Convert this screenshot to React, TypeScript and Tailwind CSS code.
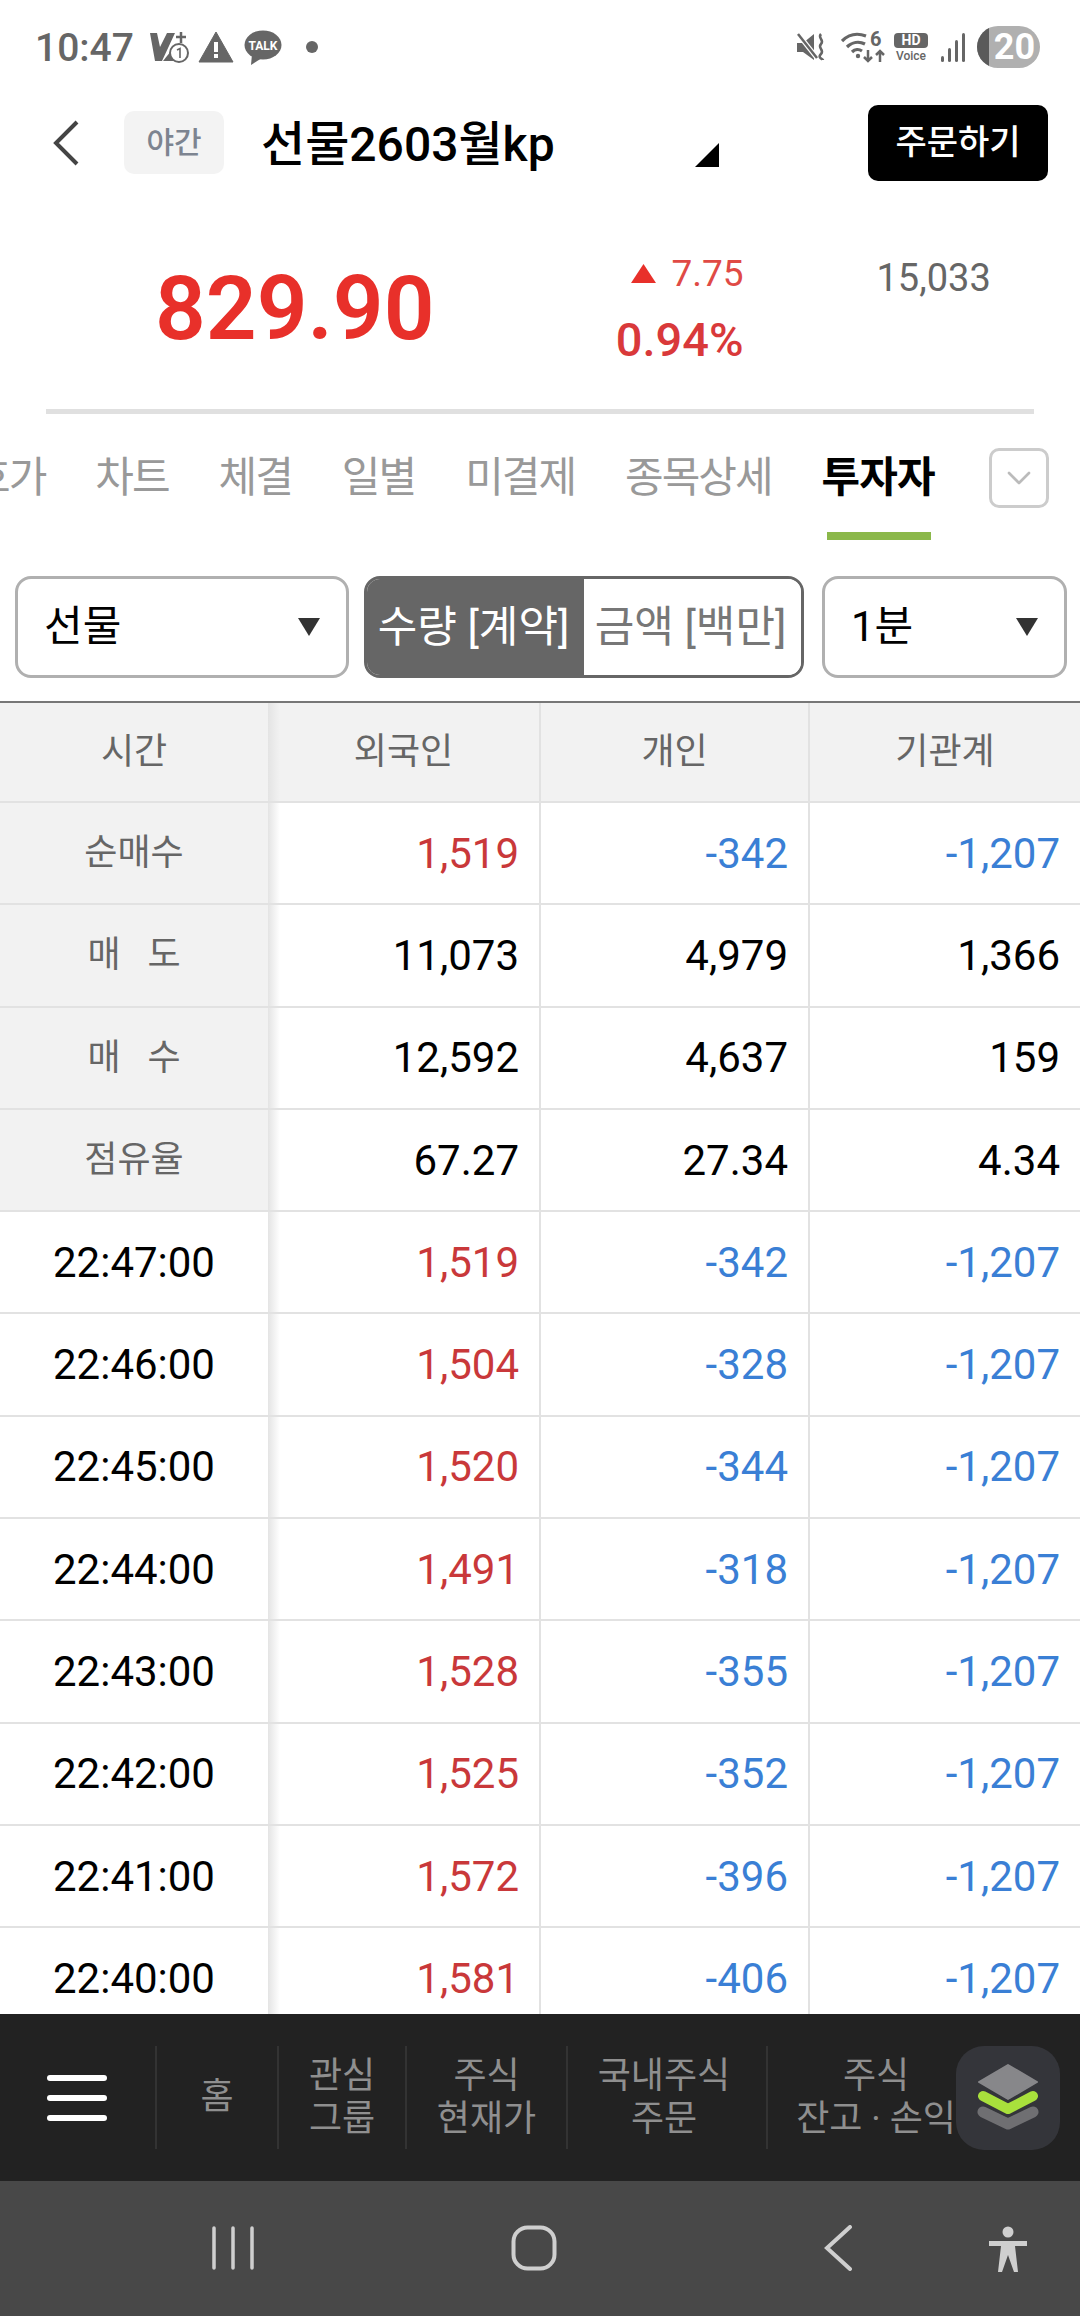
import { ChevronDown } from "lucide-react";

const FONT = "font-['Roboto','Noto_Sans_CJK_KR',sans-serif]";

const summaryRows = [
  { label: "순매수", values: ["1,519", "-342", "-1,207"], colored: true },
  { label: "매   도", values: ["11,073", "4,979", "1,366"], colored: false },
  { label: "매   수", values: ["12,592", "4,637", "159"], colored: false },
  { label: "점유율", values: ["67.27", "27.34", "4.34"], colored: false },
];

const timeRows = [
  ["22:47:00", "1,519", "-342"],
  ["22:46:00", "1,504", "-328"],
  ["22:45:00", "1,520", "-344"],
  ["22:44:00", "1,491", "-318"],
  ["22:43:00", "1,528", "-355"],
  ["22:42:00", "1,525", "-352"],
  ["22:41:00", "1,572", "-396"],
  ["22:40:00", "1,581", "-406"],
];

const tabs = ["차트", "체결", "일별", "미결제", "종목상세"];

function StatusBar() {
  return (
    <div className="h-[90px] shrink-0 flex items-center text-[#666666] pt-[4px] pl-[35px] pr-[40px]">
      <span className="text-[39px] font-medium leading-none mt-[2px]">10:47</span>
      {/* VoLTE + notification */}
      <svg className="ml-[15px]" width="40" height="32" viewBox="0 0 40 32">
        <path d="M1 2h7l3 14L18 2h8L13 30H6z" fill="#666" />
        <path d="M32 1v11M27 6h10" stroke="#666" strokeWidth="2.5" />
        <path d="M14 30l8-10 4 10z" fill="#666" />
        <circle cx="30" cy="22" r="9" fill="#fff" stroke="#666" strokeWidth="2" />
        <path d="M28 19l3-1.5V27" stroke="#666" strokeWidth="1.6" fill="none" />
      </svg>
      <svg className="ml-[9px]" width="36" height="32" viewBox="0 0 36 32">
        <path d="M18 1L35 31H1z" fill="#666" stroke="#666" strokeLinejoin="round" />
        <rect x="16" y="11" width="4" height="10" fill="#fff" />
        <rect x="16" y="23" width="4" height="4" fill="#fff" />
      </svg>
      <svg className="ml-[10px]" width="38" height="35" viewBox="0 0 38 35">
        <ellipse cx="19" cy="15" rx="18.5" ry="14.5" fill="#666" />
        <path d="M8 24l-1 11 11-7z" fill="#666" />
        <text x="19" y="20" textAnchor="middle" fontSize="12" fontWeight="700" fill="#fff" fontFamily="Roboto">
          TALK
        </text>
      </svg>
      <span className="ml-[24px] w-[12px] h-[12px] rounded-full bg-[#666666]" />

      <div className="ml-auto flex items-center">
        {/* mute */}
        <svg width="30" height="30" viewBox="0 0 30 30">
          <path d="M0 11h6L17 2v26L6 20H0z" fill="#666" />
          <path d="M1 2l19 24" stroke="#fff" strokeWidth="5" />
          <path d="M1 2l19 24" stroke="#666" strokeWidth="2.5" />
          <path d="M24 2c-4 4 4 6 0 10s4 6 0 10 2 5 2 6" stroke="#666" strokeWidth="2.5" fill="none" />
        </svg>
        {/* wifi 6 */}
        <svg className="ml-[14px]" width="45" height="32" viewBox="0 0 45 32">
          <path d="M1 10C8 3 17 2 25 5M6 16c5-5 12-6 18-3M11 21c3-3 7-3 10-1" stroke="#666" strokeWidth="3.2" fill="none" />
          <circle cx="17" cy="25" r="2.2" fill="#666" />
          <text x="29" y="15" fontSize="20" fontWeight="700" fill="#666" fontFamily="Roboto">6</text>
          <path d="M27 19v11M23 26l4 4 4-4M39 31V20M35 24l4-4 4 4" stroke="#666" strokeWidth="2.5" fill="none" />
        </svg>
        {/* HD voice */}
        <div className="ml-[8px] w-[34px] flex flex-col items-center leading-none">
          <span className="w-[34px] h-[15px] rounded-[4px] bg-[#666666] text-white text-[14px] font-bold leading-[15px] text-center">HD</span>
          <span className="text-[12px] font-medium mt-[2px]">Voice</span>
        </div>
        {/* signal */}
        <div className="ml-[13px] flex items-end gap-[4px] h-[30px]">
          <span className="w-[3px] h-[6px] rounded-sm bg-[#666666]" />
          <span className="w-[3px] h-[14px] rounded-sm bg-[#666666]" />
          <span className="w-[3px] h-[22px] rounded-sm bg-[#666666]" />
          <span className="w-[3px] h-[29px] rounded-sm bg-[#666666]" />
        </div>
        {/* battery */}
        <div className="ml-[12px] w-[63px] h-[42px] rounded-full bg-[#b0b0b0] overflow-hidden flex items-center">
          <span className="w-[12px] h-full bg-[#5a5a5a] shrink-0" />
          <span className="flex-1 text-center text-white text-[36px] font-bold leading-none">20</span>
        </div>
      </div>
    </div>
  );
}

function Header() {
  return (
    <div className="h-[91px] shrink-0 flex items-center pl-[53px] pr-[32px]">
      <svg width="26" height="46" viewBox="0 0 26 46">
        <path d="M24 2L3 23l21 21" stroke="#444" strokeWidth="4" fill="none" />
      </svg>
      <div className="ml-[45px] w-[100px] h-[63px] rounded-[10px] bg-[#f3f3f3] flex items-center justify-center text-[#7d8490] text-[30px] font-medium">
        야간
      </div>
      <h1 className="ml-[37px] text-[48px] font-medium text-black leading-none mt-[4px]">선물2603월kp</h1>
      <svg className="ml-[140px] mt-[24px]" width="24" height="24" viewBox="0 0 24 24">
        <path d="M24 0v24H0z" fill="#000" />
      </svg>
      <button className="ml-auto w-[180px] h-[76px] rounded-[10px] bg-black text-white text-[34px] font-medium">
        주문하기
      </button>
    </div>
  );
}

function Price() {
  return (
    <div className="h-[221px] shrink-0 flex items-start">
      <div className="ml-[155px] mt-[71px] text-[89px] font-semibold leading-[100px] text-[#e8302a]">829.90</div>
      <div className="ml-[182px] mt-[63px] flex flex-col items-end w-[127px]">
        <div className="flex items-center h-[44px] text-[#e04a45]">
          <svg width="25" height="19" viewBox="0 0 25 19">
            <path d="M12.5 0L25 19H0z" fill="#e8302a" />
          </svg>
          <span className="ml-[15px] text-[37px] leading-none">7.75</span>
        </div>
        <div className="mt-[20px] text-[47px] font-medium leading-[50px] text-[#d9393a]">0.94%</div>
      </div>
      <div className="ml-[133px] mt-[68px] text-[38px] leading-[44px] text-[#666666]">15,033</div>
    </div>
  );
}

function Tabs() {
  return (
    <div className="h-[167px] shrink-0">
      <div className="mx-[46px] h-[5px] bg-[#e0e0e0]" />
      <div className="h-[140px] pb-[12px] flex items-center pr-[31px] overflow-hidden">
        <div className="flex items-center gap-[50px] text-[42px] leading-none text-[#999999] ml-[-28px] tracking-[-2px]">
          <span>호가</span>
          {tabs.map((t) => (
            <span key={t}>{t}</span>
          ))}
          <span className="relative font-bold text-black tracking-[-1px]">
            투자자
            <span className="absolute left-[5px] right-[4px] top-[75px] h-[8px] bg-[#8bb84a]" />
          </span>
        </div>
        <div className="ml-auto w-[60px] h-[60px] rounded-[10px] border-[3px] border-[#cccccc] flex items-center justify-center">
          <ChevronDown className="w-[40px] h-[40px] text-[#bbbbbb]" strokeWidth={1.6} />
        </div>
      </div>
    </div>
  );
}

function Select({ label, className }: { label: string; className: string }) {
  return (
    <div className={`h-[102px] rounded-[16px] border-[3px] border-[#b0b0b0] flex items-center px-[26px] text-[42px] text-black ${className}`}>
      <span className="leading-none">{label}</span>
      <svg className="ml-auto" width="22" height="18" viewBox="0 0 22 18">
        <path d="M0 0h22L11 18z" fill="#333" />
      </svg>
    </div>
  );
}

function Controls() {
  return (
    <div className="h-[125px] shrink-0 pl-[15px] pr-[13px] flex gap-[15px]">
      <Select label="선물" className="w-[334px]" />
      <div className="w-[440px] h-[102px] rounded-[16px] border-[3px] border-[#666666] overflow-hidden flex text-[43px] whitespace-nowrap">
        <div className="w-[217px] pr-[4px] bg-[#666666] text-white flex items-center justify-center">수량 [계약]</div>
        <div className="flex-1 pr-[4px] bg-white text-[#777777] flex items-center justify-center">금액 [백만]</div>
      </div>
      <Select label="1분" className="ml-[3px] flex-1" />
    </div>
  );
}

function Row({
  first,
  firstClass,
  cells,
}: {
  first: string;
  firstClass: string;
  cells: { text: string; color: string }[];
}) {
  return (
    <div className="h-[102.3px] shrink-0 grid grid-cols-[268px_271px_269px_272px] border-b-2 border-[#e2e2e2]">
      <div className={`flex items-center justify-center whitespace-pre ${firstClass}`}>{first}</div>
      {cells.map((c, i) => (
        <div
          key={i}
          className={`flex items-center justify-end pr-[20px] text-[42px] ${c.color} ${
            i === 0
              ? "bg-[linear-gradient(to_right,#e4e4e4,#ffffff_12px)]"
              : "border-l-2 border-[#e2e2e2]"
          }`}
        >
          {c.text}
        </div>
      ))}
    </div>
  );
}

function DataTable() {
  return (
    <div className="flex-1 min-h-0 overflow-hidden border-t-2 border-[#777777]">
      {/* head */}
      <div className="h-[100px] grid grid-cols-[268px_271px_269px_272px] bg-[#f2f2f2] border-b-2 border-[#e2e2e2] text-[36px] text-[#666666]">
        <div className="flex items-center justify-center">시간</div>
        <div className="flex items-center justify-center bg-[linear-gradient(to_right,#e4e4e4,#f2f2f2_12px)]">외국인</div>
        <div className="flex items-center justify-center border-l-2 border-[#e2e2e2]">개인</div>
        <div className="flex items-center justify-center border-l-2 border-[#e2e2e2]">기관계</div>
      </div>
      {summaryRows.map((r) => (
        <Row
          key={r.label}
          first={r.label}
          firstClass="bg-[#f2f2f2] text-[36px] text-[#666666]"
          cells={[
            { text: r.values[0], color: r.colored ? "text-[#c9383a]" : "text-black" },
            { text: r.values[1], color: r.colored ? "text-[#3a7fd5]" : "text-black" },
            { text: r.values[2], color: r.colored ? "text-[#3a7fd5]" : "text-black" },
          ]}
        />
      ))}
      {timeRows.map((r) => (
        <Row
          key={r[0]}
          first={r[0]}
          firstClass="bg-white text-[42px] text-black"
          cells={[
            { text: r[1], color: "text-[#c9383a]" },
            { text: r[2], color: "text-[#3a7fd5]" },
            { text: "-1,207", color: "text-[#3a7fd5]" },
          ]}
        />
      ))}
    </div>
  );
}

function MenuItem({ lines, className }: { lines: string[]; className: string }) {
  return (
    <div className={`h-[103px] border-l-2 border-[#333333] flex flex-col items-center justify-center shrink-0 leading-[43px] whitespace-nowrap ${className}`}>
      {lines.map((l) => (
        <span key={l}>{l}</span>
      ))}
    </div>
  );
}

function BottomMenu() {
  return (
    <div className="h-[167px] shrink-0 bg-[#222222] relative flex items-center overflow-hidden text-[#8f8f8f] text-[36px]">
      <div className="w-[155px] shrink-0 pl-[47px] flex flex-col gap-[14px]">
        <span className="w-[60px] h-[6px] rounded-full bg-white" />
        <span className="w-[60px] h-[6px] rounded-full bg-white" />
        <span className="w-[60px] h-[6px] rounded-full bg-white" />
      </div>
      <MenuItem lines={["홈"]} className="w-[122px]" />
      <MenuItem lines={["관심", "그룹"]} className="w-[128px]" />
      <MenuItem lines={["주식", "현재가"]} className="w-[161px]" />
      <MenuItem lines={["국내주식", "주문"]} className="w-[200px] pr-[6px]" />
      <MenuItem lines={["주식", "잔고 · 손익"]} className="w-[218px]" />
      {/* floating layers button */}
      <div className="absolute left-[956px] top-[32px] w-[104px] h-[104px] rounded-[28px] bg-[#34353a] flex items-center justify-center">
        <svg width="64" height="68" viewBox="0 0 64 68">
          <path d="M32 1l29 17-29 17L3 18z" fill="#87878a" stroke="#87878a" strokeWidth="2" strokeLinejoin="round" />
          <path d="M7 48l25 12 25-12" fill="none" stroke="#6f6f72" strokeWidth="11" strokeLinejoin="round" strokeLinecap="round" />
          <path d="M7 32l25 13 25-13" fill="none" stroke="#34353a" strokeWidth="15" strokeLinejoin="round" strokeLinecap="round" />
          <path d="M7 32l25 13 25-13" fill="none" stroke="#a8e03c" strokeWidth="10" strokeLinejoin="round" strokeLinecap="round" />
        </svg>
      </div>
    </div>
  );
}

function SystemNav() {
  return (
    <div className="h-[135px] shrink-0 bg-[#484848] flex items-center pb-[2px]">
      <svg className="ml-[211px]" width="44" height="44" viewBox="0 0 44 44">
        <path d="M3 2v40M22 2v40M41 2v40" stroke="#cfcfcf" strokeWidth="3.5" strokeLinecap="round" />
      </svg>
      <svg className="ml-[256px]" width="46" height="46" viewBox="0 0 46 46">
        <rect x="2.5" y="2.5" width="41" height="41" rx="14" stroke="#cfcfcf" strokeWidth="4" fill="none" />
      </svg>
      <svg className="ml-[266px]" width="30" height="46" viewBox="0 0 30 46">
        <path d="M27 2L4 23l23 21" stroke="#cfcfcf" strokeWidth="4" fill="none" strokeLinecap="round" />
      </svg>
      <svg className="ml-[135px] mt-[4px]" width="40" height="48" viewBox="0 0 40 48">
        <circle cx="20" cy="6" r="5.5" fill="#cfcfcf" />
        <path d="M1 15h38v5H27l3 26h-4l-6-17-6 17h-4l3-26H1z" fill="#cfcfcf" />
      </svg>
    </div>
  );
}

export default function App() {
  return (
    <div className={`w-[1080px] h-[2316px] bg-white flex flex-col overflow-hidden ${FONT}`}>
      <StatusBar />
      <div className="h-[7px] shrink-0" />
      <Header />
      <Price />
      <Tabs />
      <Controls />
      <DataTable />
      <BottomMenu />
      <SystemNav />
    </div>
  );
}
